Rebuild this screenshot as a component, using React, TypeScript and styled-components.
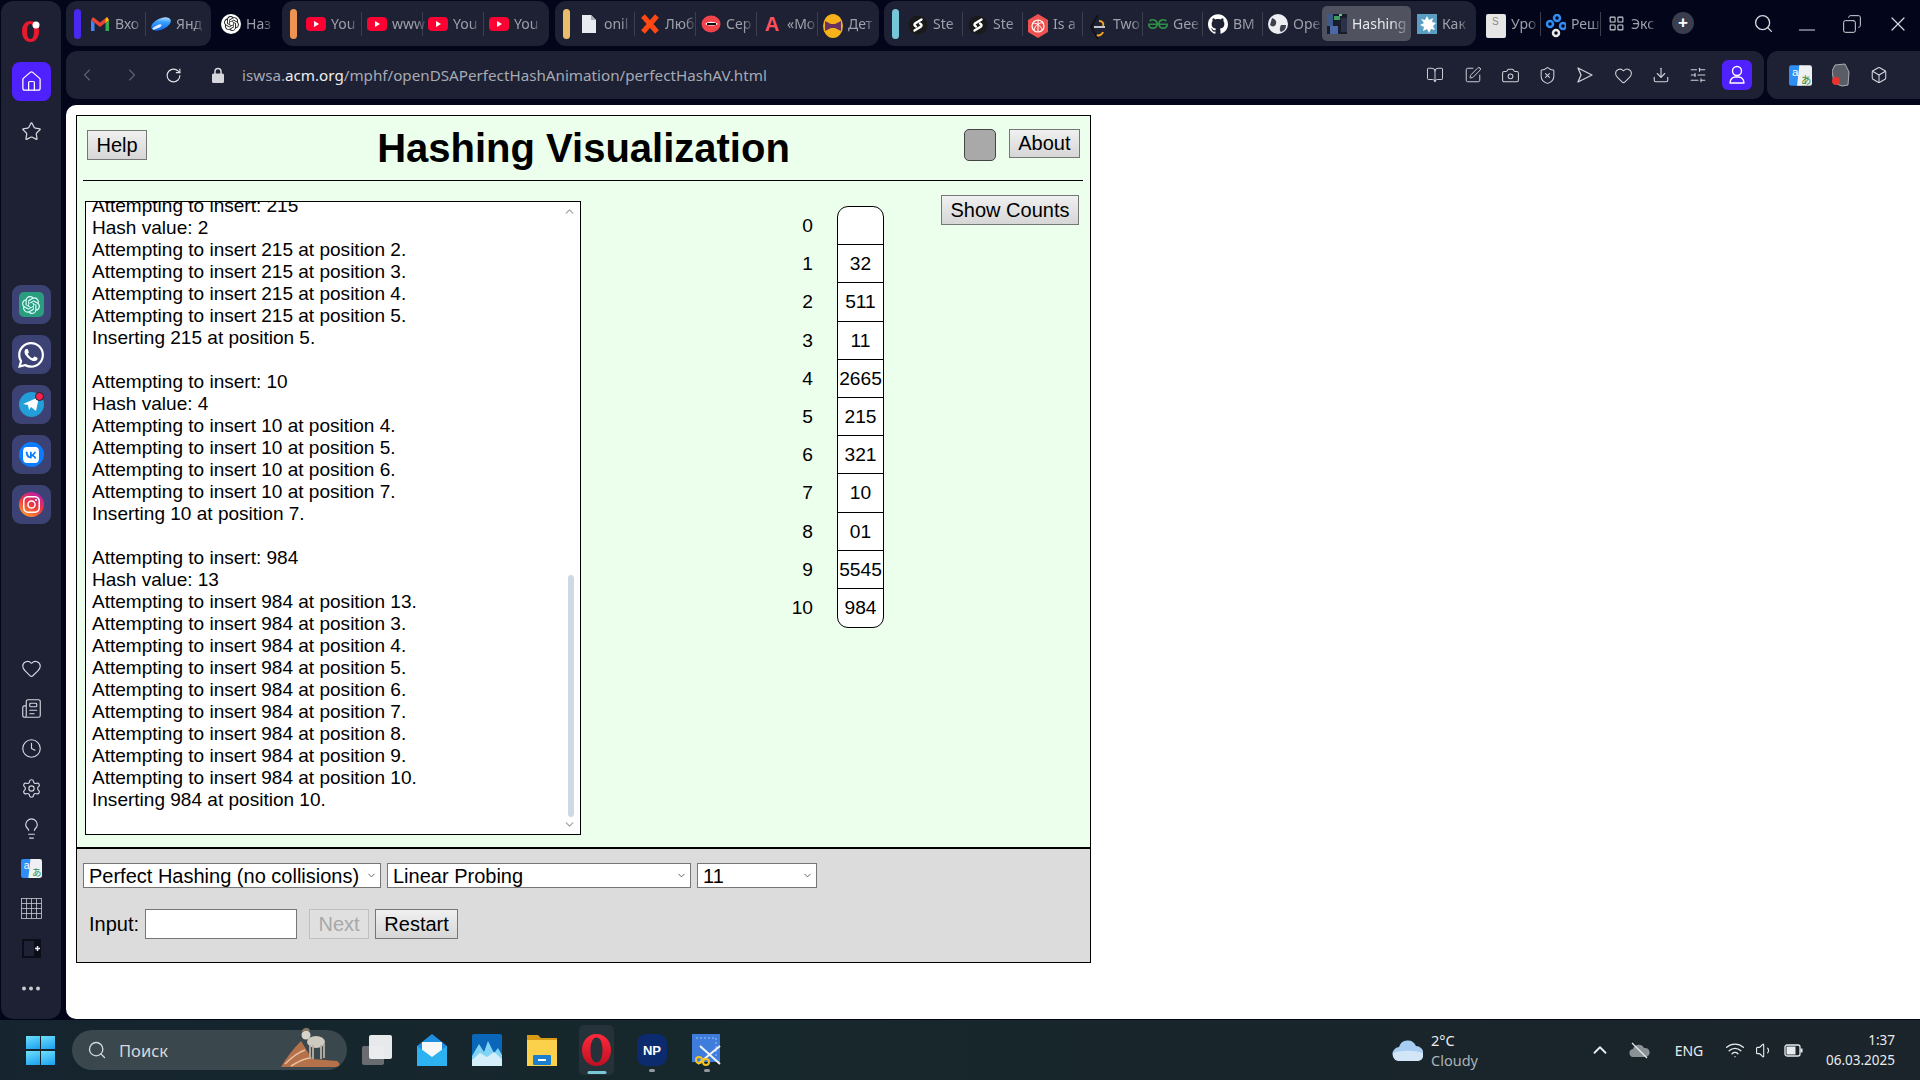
import React from "react";
import styled, { createGlobalStyle } from "styled-components";
import {
  BookOpen, Box, Camera, ChevronDown, ChevronLeft, ChevronRight, ChevronUp, Clock, Copy, Download, Heart, House,
  Lightbulb, Minus, Newspaper, RotateCw, Search, Settings, ShieldX, SlidersHorizontal, SquarePen, Star, Volume1, Wifi, X, LayoutGrid,
} from "lucide-react";
import { SiGeeksforgeeks, SiGithub, SiInstagram, SiOpenai, SiVk, SiWhatsapp } from "react-icons/si";

const Global = createGlobalStyle`
  html, body { margin: 0; padding: 0; height: 100%; overflow: hidden; background: #03051a; }
  #root { height: 100%; }
  * { box-sizing: border-box; }
`;

const ui = `"Noto Sans", "Open Sans", sans-serif`;
const arial = `"Liberation Sans", Arial, sans-serif`;

const Shell = styled.div`
  height: 1080px; display: grid; grid-template-rows: 1fr 60px; background: #03051a; overflow: hidden;
`;
const Window = styled.div`display: flex; min-height: 0; padding: 1px 0 1px 1px;`;

const Sidebar = styled.nav`
  width: 60px; background: #1d2133; border-radius: 12px; display: flex; flex-direction: column;
  align-items: center; padding-top: 18px; flex: none; color: #d5d8e0;
`;
const Logo = styled.div`height: 24px; width: 24px; display: grid; place-items: center; margin-bottom: 19px;`;
const HomeTile = styled.div`
  width: 39px; height: 39px; border-radius: 8px; background: #5021ff; color: #fff;
  display: grid; place-items: center; margin-bottom: 10px;
`;
const SideIcon = styled.div<{ $mt?: number }>`
  width: 40px; height: 40px; display: grid; place-items: center; margin-top: ${p => p.$mt ?? 0}px;
`;
const AppTile = styled.div<{ $mt?: number }>`
  width: 39px; height: 39px; border-radius: 9px; background: #3d4275; display: grid; place-items: center;
  margin-top: ${p => p.$mt ?? 11}px; position: relative;
`;
const AppGlyph = styled.div<{ $bg: string; $round?: boolean }>`
  width: 25px; height: 25px; background: ${p => p.$bg}; border-radius: ${p => (p.$round ? "50%" : "5px")};
  display: grid; place-items: center; color: #fff;
`;
const Badge = styled.span`
  position: absolute; top: 7px; right: 7px; width: 9px; height: 9px; border-radius: 50%; background: #ff1f4b; border: 1px solid #1d2133;
`;

const Main = styled.div`flex: 1; min-width: 0; margin-left: 5px; display: flex; flex-direction: column;`;
const TabStrip = styled.div`height: 45px; display: flex; align-items: stretch; flex: none;`;
const TabGroup = styled.div<{ $ml?: number; $pr?: number; $w?: number }>`
  --tab-w: ${p => p.$w ?? 50}px;
  background: #1d2133; border-radius: 11px; display: flex; align-items: center;
  padding: 0 ${p => p.$pr ?? 10}px 0 8px; margin-left: ${p => p.$ml ?? 0}px;
`;
const Loose = styled.div<{ $ml: number }>`
  --tab-w: 49px; display: flex; align-items: center; margin-left: ${p => p.$ml}px;
`;
const Accent = styled.span<{ $c: string }>`
  width: 7px; height: 30px; border-radius: 4px; background: ${p => p.$c}; margin-right: 9px; flex: none;
`;
const TabItem = styled.div<{ $active?: boolean }>`
  display: flex; align-items: center; gap: 5px; height: 35px; flex: none;
  width: ${p => (p.$active ? "89px" : "var(--tab-w)")};
  ${p => p.$active && "background:#50525f;border-radius:5px;padding:0 5px;margin:0 6px 0 5px;"}
`;
const Fav = styled.span`width: 20px; height: 20px; flex: none; display: grid; place-items: center;`;
const TabTitle = styled.span<{ $active?: boolean }>`
  font: 14px ${ui}; color: ${p => (p.$active ? "#e8e9ee" : "#9ea1ab")}; white-space: nowrap; flex: 1;
  -webkit-mask-image: linear-gradient(90deg, #000 72%, rgba(0,0,0,.25));
  mask-image: linear-gradient(90deg, #000 72%, rgba(0,0,0,.25));
`;
const TabSep = styled.span`width: 1px; height: 24px; background: #3b3e4e; margin: 0 5px; flex: none;`;
const LetterFav = styled.span`font: 700 20px ${arial}; color: #ff4f5e; line-height: 20px;`;
const PlusBtn = styled.div`
  width: 22px; height: 22px; border-radius: 50%; background: #3a3d4d; color: #fff; display: grid; place-items: center;
  margin: 11px 0 0 17px; font: 700 17px ${arial};
`;
const WinControls = styled.div`
  margin-left: auto; display: flex; align-items: center; color: #d7d9de; padding-right: 19px; gap: 20px;
`;
const WinBtn = styled.span<{ $w: number }>`width: ${p => p.$w}px; display: grid; place-items: center;`;

const ToolRow = styled.div`display: flex; gap: 3px; margin-top: 5px; height: 48px; flex: none;`;
const AddressBar = styled.div`
  width: 1698px; flex: none; background: #1d2133; border-radius: 11px; display: flex; align-items: center; color: #c9ccd4; position: relative;
`;
const NavIcon = styled.span<{ $w: number; $dim?: boolean }>`
  width: ${p => p.$w}px; display: grid; place-items: center; flex: none; color: ${p => (p.$dim ? "#5e6170" : "#dfe1e6")};
`;
const Url = styled.span`font: 15.2px ${ui}; color: #a7aab4; margin-left: -4px; white-space: nowrap; b { font-weight: 400; color: #eceef2; }`;
const ToolIcons = styled.div`margin-left: auto; display: flex; align-items: center; gap: 0; padding-right: 12px; color: #cfd2d9;`;
const ToolIcon = styled.span`width: 37.6px; display: grid; place-items: center;`;
const UserBtn = styled.span`
  width: 30px; height: 30px; border-radius: 6px; background: #5021ff; color: #fff; display: grid; place-items: center; margin-left: 5px;
`;
const ExtBar = styled.div`
  flex: 1; background: #1d2133; border-radius: 11px; display: flex; align-items: center; padding-left: 22px; gap: 20px; position: relative; color: #d5d8e0;
`;
const ExtMark = styled.span`width: 7px; height: 30px; border-radius: 3px; background: #5021ff; margin-left: 17px;`;

const Page = styled.main`
  flex: 1; min-height: 0; margin-top: 6px; background: #fff; border-radius: 10px; padding: 10px;
`;
const AppBox = styled.section`
  width: 1015px; height: 848px; border: 1px solid #000; display: flex; flex-direction: column; font: 20px ${arial}; color: #000;
`;
const Upper = styled.div`flex: 1; min-height: 0; background: #ecffec; display: flex; flex-direction: column;`;
const Header = styled.header`
  height: 64px; display: grid; grid-template-columns: 1fr auto 1fr; flex: none; padding: 0 10px;
`;
const Title = styled.h1`margin: 0; font: 700 40px/64px ${arial}; align-self: center;`;
const HeaderLeft = styled.div`padding-top: 14px;`;
const HeaderRight = styled.div`display: flex; justify-content: flex-end; gap: 13px; padding-top: 13px;`;
const Btn = styled.button<{ $h?: number }>`
  height: ${p => p.$h ?? 30}px; border: 1px solid #767676; border-radius: 0; background: linear-gradient(#f0f0f0, #d6d6d6);
  font: 20px ${arial}; color: #000; padding: 0 8.5px; margin: 0;
  &:disabled { color: #a8a8a8; border-color: #c0c0c0; background: #e0e0e0; }
`;
const Led = styled.div`width: 32px; height: 32px; border-radius: 5px; border: 1px solid #444; background: #a9a9a9;`;
const Rule = styled.hr`
  height: 1px; border: 0; background: #000; margin: 0 7px 0 6px; flex: none;
`;
const Content = styled.div`flex: 1; min-height: 0; display: flex; align-items: flex-start; padding: 14px 11px 0 8px;`;
const Log = styled.div`
  width: 496px; height: 634px; margin-top: 6px; border: 1px solid #000; background: #fff; overflow: hidden; position: relative; flex: none; padding-left: 6px;
`;
const LogText = styled.div`margin-top: -7px; font-size: 19.05px; line-height: 22px; white-space: pre;`;
const ScrollThumb = styled.div`
  position: absolute; right: 6px; top: 373px; width: 6px; height: 242px; border-radius: 3px; background: #cfd9e3;
`;
const ScrollArrow = styled.span<{ $top: number }>`position: absolute; right: 4px; top: ${p => p.$top}px; color: #a4a7ab; display: grid;`;
const Table = styled.div`
  margin: 11px 0 0 192px; display: flex; gap: 24px; flex: none; font-size: 19.2px;
`;
const IndexCol = styled.div`width: 40px; text-align: right;`;
const IndexCell = styled.div`height: 38.2px; line-height: 40px;`;
const CellCol = styled.div`
  width: 47px; border: 1px solid #000; border-radius: 11px; background: #fff; overflow: hidden; text-align: center;
`;
const Cell = styled.div`
  height: 38.2px; line-height: 37px; border-bottom: 1px solid #000; &:last-child { border-bottom: 0; }
`;
const CountBtn = styled(Btn)`margin-left: auto;`;

const Lower = styled.div`
  height: 115px; flex: none; border-top: 2px solid #000; background: #dcdcdc; padding: 14px 0 0 6px;
`;
const SelectRow = styled.div`display: flex; gap: 6px; height: 25px;`;
const PickWrap = styled.span`position: relative; display: block;`;
const Pick = styled.select<{ $w: number }>`
  display: block; appearance: none; width: ${p => p.$w}px; height: 25px; font: 20px ${arial}; background-color: #fff; border: 1px solid #767676; border-radius: 0; padding: 0 0 0 5px; color: #000;
`;
const PickArrow = styled.span`position: absolute; right: 4px; top: 7px; color: #555; display: grid; pointer-events: none;`;
const InputRow = styled.div`display: flex; align-items: center; margin: 21px 0 0 6px; height: 30px;`;
const InputLabel = styled.label`margin-right: 6px;`;
const TextInput = styled.input`
  width: 152px; height: 30px; border: 1px solid #767676; background: #fff; padding: 0; margin-right: 12px;
`;
const NextBtn = styled(Btn)`width: 60px; margin-right: 6px; padding: 0;`;
const RestartBtn = styled(Btn)`width: 83px; padding: 0;`;

const Taskbar = styled.footer`
  background: linear-gradient(90deg, #15242e, #17282c 35%, #18262b 60%, #1b242a); display: flex; align-items: center; position: relative; color: #e8ecef;
`;
const Start = styled.div`margin-left: 26px; width: 29px; height: 29px; display: grid; grid-template-columns: 1fr 1fr; gap: 1.5px;`;
const Pane = styled.span`background: linear-gradient(160deg, #6fe0fb, #1a9ff0);`;
const SearchPill = styled.div`
  margin-left: 17px; width: 275px; height: 40px; border-radius: 20px; background: #3a474d; display: flex; align-items: center; padding-left: 15px;
  position: relative; color: #d4d9dc; font: 16.500px ${ui}; gap: 12px;
`;
const Ram = styled.div`position: absolute; right: 6px; top: -3px; width: 62px; height: 42px;`;
const Pinned = styled.div`display: flex; align-items: center; margin-left: 7px;`;
const PinSlot = styled.div<{ $active?: boolean; $dot?: boolean }>`
  width: 45px; height: 50px; margin-right: 10px; border-radius: 5px; display: grid; place-items: center; position: relative;
  margin-left: 0; ${p => p.$active && "background:#253239;width:35px;margin:0 15px 0 5px;"}
  &::after {
    content: ""; position: absolute; bottom: 1px; left: 50%; transform: translateX(-50%); border-radius: 2px;
    ${p => (p.$active ? "width:19px;height:3px;background:#78c8d8;" : p.$dot ? "width:6px;height:3px;background:#8f999e;bottom:3px;" : "")}
  }
`;
const Tray = styled.div`margin-left: auto; display: flex; align-items: center; height: 100%; padding-right: 37px;`;
const Weather = styled.div`display: flex; align-items: center; gap: 8px; margin-right: 96px; position: relative;`;
const WeatherText = styled.div`font: 14.5px/20px ${ui};`;
const Stack = styled.div`font: 13.5px/20px ${ui}; text-align: right; margin-left: 21px;`;
const Muted = styled.div`color: #aab2b7;`;
const TrayIcon = styled.span<{ $w: number }>`width: ${p => p.$w}px; display: grid; place-items: center;`;
const Lang = styled.span`font: 14px ${ui}; width: 70px; text-align: center;`;
const GptBadge = styled.span`
  width: 20px; height: 20px; border-radius: 50%; background: #fff; display: grid; place-items: center; color: #222;
`;
const SsBox = styled.span`
  width: 20px; height: 24px; background: #e6e6e6; border-radius: 2px; color: #888; font: 10px ${arial}; padding: 2px 0 0 6px;
`;

const Yt = () => (
  <svg width="20" height="20" viewBox="0 0 20 20"><rect y="3" width="20" height="14" rx="4" fill="#ff0033" /><path d="M8 7l5 3-5 3z" fill="#fff" /></svg>
);
const Gmail = () => (
  <svg width="20" height="20" viewBox="0 0 20 20">
    <path d="M1 6v11h3.5V9z" fill="#4285f4" /><path d="M19 6v11h-3.5V9z" fill="#34a853" />
    <path d="M1 6l2-3 7 5.5L17 3l2 3-9 7z" fill="#ea4335" /><path d="M15.5 5L17 3l2 3-3.500 3z" fill="#fbbc04" />
  </svg>
);
const Yandex = () => (
  <svg width="20" height="20" viewBox="0 0 20 20"><defs><linearGradient id="ya" x1="0" y1="1" x2="1" y2="0"><stop offset="0" stopColor="#0a4fd8" /><stop offset=".6" stopColor="#35a0ff" /><stop offset="1" stopColor="#fff" /></linearGradient></defs>
    <ellipse cx="10" cy="10" rx="10.500" ry="5.500" transform="rotate(-25 10 10)" fill="url(#ya)" /><ellipse cx="6" cy="13" rx="5" ry="1.500" transform="rotate(-25 6 13)" fill="#fff" opacity=".85" /></svg>
);
const Gpt = () => (<GptBadge><SiOpenai size={15} /></GptBadge>);
const Doc = () => (<svg width="20" height="20" viewBox="0 0 20 20"><path d="M3 1h9l5 5v13H3z" fill="#e8ebf0" /><path d="M12 1l5 5h-5z" fill="#a9adb6" /></svg>);
const Cross = () => (<svg width="20" height="20" viewBox="0 0 20 20"><path d="M3 2l14 16M17 2L3 18" stroke="#ff4814" strokeWidth="5" /></svg>);
const Lips = () => (<svg width="20" height="20" viewBox="0 0 20 20"><ellipse cx="10" cy="10" rx="9.500" ry="8.500" fill="#f2434b" /><path d="M4 10c3-3 9-3 13 0-4 2-9 2-13 0z" fill="#fff" /><rect x="6" y="9" width="9" height="2" fill="#111" /></svg>);
const Bow = () => (<svg width="20" height="24" viewBox="0 0 20 24"><ellipse cx="10" cy="12" rx="10" ry="12" fill="#f6b21b" /><path d="M2 7l6 3h4l6-3v10l-6-3H8l-6 3z" fill="#69325f" /></svg>);
const Step = () => (
  <svg width="20" height="22" viewBox="0 0 20 22"><circle cx="10" cy="11" r="9.500" fill="#1a1a1a" /><path d="M13.500 5.500L7 9.500Q5.500 11 8 12.500M6.500 16.500L13 12.500Q14.500 11 12 9.500" stroke="#fff" strokeWidth="2.400" fill="none" strokeLinecap="round" /></svg>
);
const Hex = () => (<svg width="20" height="24" viewBox="0 0 20 24"><path d="M10 0l10 6v12l-10 6L0 18V6z" fill="#ef5350" /><circle cx="10" cy="12" r="6" fill="none" stroke="#fff" strokeWidth="1.200" /><path d="M5 9c4 0 8 3 9 7M15 9c-3-1-8 2-9 7M10 6v12" stroke="#fff" strokeWidth="1" fill="none" /></svg>);
const Two = () => (<svg width="20" height="26" viewBox="0 0 20 26"><path d="M10 1L3 13l7 12" stroke="#111" strokeWidth="1.800" fill="none" /><path d="M11 7c4 0 5 3 4 5M15 18c-1 3-4 4-6 3" stroke="#f5a623" strokeWidth="2" fill="none" /><rect x="6" y="12" width="11" height="2" fill="#c4c6cc" /></svg>);
const Globe = () => (<svg width="20" height="20" viewBox="0 0 20 20"><circle cx="10" cy="10" r="10" fill="#eceef2" /><path d="M4 4c3 1 5 3 4 6s-4 3-6 1zM13 11l5 0c0 4-2 6-5 7-2-2-1-5 0-7z" fill="#3e414d" /></svg>);
const HashFav = () => (
  <svg width="20" height="20" viewBox="0 0 20 20"><rect width="20" height="20" fill="#181d2d" /><rect x="0" y="0" width="6" height="12" fill="#3d5a8a" /><rect x="7" y="2" width="6" height="4" fill="#3f9b5e" /><rect x="14" y="4" width="6" height="14" fill="#2a3148" /><rect x="3" y="12" width="8" height="8" fill="#4b6aa5" /><rect x="12" y="0" width="3" height="2" fill="#74c08c" /></svg>
);
const Splat = () => (<svg width="20" height="20" viewBox="0 0 20 20"><rect width="20" height="20" fill="#5a9fc2" /><path d="M10 2l2 4 4-2-1 4 4 1-3 3 2 4-4-1-2 4-2-4-4 2 1-4-4-2 4-2-3-4 4 1z" fill="#fff" /></svg>);
const Net = () => (<svg width="20" height="24" viewBox="0 0 20 24"><g fill="none" strokeWidth="2.500" stroke="#2f8df5"><circle cx="4" cy="10" r="3" /><circle cx="11" cy="4" r="3" /><circle cx="17" cy="12" r="3" /></g><circle cx="10" cy="19" r="3" fill="none" stroke="#e8e8e8" strokeWidth="2.500" /></svg>);

type T = { i: React.ReactNode; t: string; active?: boolean };
const Tabs = ({ items }: { items: T[] }) => (
  <>
    {items.map((x, k) => (
      <React.Fragment key={k}>
        {k > 0 && !x.active && !items[k - 1].active && <TabSep />}
        <TabItem $active={x.active}>
          <Fav>{x.i}</Fav>
          <TabTitle $active={x.active}>{x.t}</TabTitle>
        </TabItem>
      </React.Fragment>
    ))}
  </>
);

const OperaMark = () => (
  <svg width="24" height="24" viewBox="0 0 24 24">
    <path fillRule="evenodd" d="M11.500 2C5.500 2 3 7 3 12.500S6 23 11.500 23 20 18 20 12.500 17.500 2 11.500 2zm0 3c2.500 0 3.500 3.500 3.500 7.500s-1 7.500-3.500 7.500S8 16.500 8 12.500 9 5 11.500 5z" fill="#e8182d" />
    <circle cx="17" cy="6" r="3.500" fill="#fff" />
  </svg>
);
const OperaTask = () => (
  <svg width="29" height="32" viewBox="0 0 29 32">
    <defs><linearGradient id="op" x1="0" y1="0" x2="0" y2="1"><stop offset="0" stopColor="#ff2a3c" /><stop offset="1" stopColor="#c00f22" /></linearGradient></defs>
    <path fillRule="evenodd" d="M14.500 0C6 0 0 7 0 16s6 16 14.500 16S29 25 29 16 23 0 14.500 0zm0 3.500c4 0 6 5.500 6 12.500s-2 12.500-6 12.500-6-5.500-6-12.500 2-12.500 6-12.500z" fill="url(#op)" />
  </svg>
);
const Translate = ({ s = 25 }: { s?: number }) => (
  <svg width={s} height={s} viewBox="0 0 20 20">
    <path d="M2 1h9v18H2a2 2 0 01-2-2V3a2 2 0 012-2z" fill="#2f8ef5" /><path d="M9 1h9a2 2 0 012 2v14a2 2 0 01-2 2H7z" fill="#eef0f2" />
    <text x="2.500" y="10" fontSize="10" fill="#fff" fontFamily="Liberation Sans">a</text>
    <text x="10.500" y="17" fontSize="9" fill="#2e8b40" fontFamily="Noto Sans CJK JP">あ</text>
  </svg>
);
const Sudoku = () => (
  <svg width="21" height="21" viewBox="0 0 21 21" stroke="#c9cbd2" strokeWidth=".8" fill="none">
    <rect x=".5" y=".5" width="20" height="20" /><path d="M5.500 .5v20M10.500 .5v20M15.500 .5v20M.5 5.500h20M.5 10.500h20M.5 15.500h20" />
  </svg>
);

const logLines = `Attempting to insert: 215
Hash value: 2
Attempting to insert 215 at position 2.
Attempting to insert 215 at position 3.
Attempting to insert 215 at position 4.
Attempting to insert 215 at position 5.
Inserting 215 at position 5.

Attempting to insert: 10
Hash value: 4
Attempting to insert 10 at position 4.
Attempting to insert 10 at position 5.
Attempting to insert 10 at position 6.
Attempting to insert 10 at position 7.
Inserting 10 at position 7.

Attempting to insert: 984
Hash value: 13
Attempting to insert 984 at position 13.
Attempting to insert 984 at position 3.
Attempting to insert 984 at position 4.
Attempting to insert 984 at position 5.
Attempting to insert 984 at position 6.
Attempting to insert 984 at position 7.
Attempting to insert 984 at position 8.
Attempting to insert 984 at position 9.
Attempting to insert 984 at position 10.
Inserting 984 at position 10.`;

const cells = ["", "32", "511", "11", "2665", "215", "321", "10", "01", "5545", "984"];

const Select = ({ w, label }: { w: number; label: string }) => (
  <PickWrap>
    <Pick $w={w} defaultValue={label}><option value={label}>{label}</option></Pick>
    <PickArrow><ChevronDown size={11} strokeWidth={2} /></PickArrow>
  </PickWrap>
);

export default function App() {
  return (
    <>
      <Global />
      <Shell>
        <Window>
          <Sidebar>
            <Logo><OperaMark /></Logo>
            <HomeTile><House size={23} strokeWidth={1.3} /></HomeTile>
            <SideIcon><Star size={21} strokeWidth={1.4} /></SideIcon>
            <AppTile $mt={134}><AppGlyph $bg="#2a9d7f"><SiOpenai size={18} color="#dff" /></AppGlyph></AppTile>
            <AppTile><SiWhatsapp size={26} color="#fff" /></AppTile>
            <AppTile><AppGlyph $bg="#229ed9" $round><svg width="17" height="15" viewBox="0 0 17 15"><path d="M0 7L16 0l-3 14-5-4-2 3-1-5z" fill="#fff" /></svg></AppGlyph><Badge /></AppTile>
            <AppTile><AppGlyph $bg="#0a7cff" $round><SiVk size={16} /></AppGlyph></AppTile>
            <AppTile><AppGlyph $bg="linear-gradient(30deg,#fdb32c,#f0353f 50%,#b31fb4 90%)" $round><SiInstagram size={17} /></AppGlyph></AppTile>
            <SideIcon $mt={124}><Heart size={21} strokeWidth={1.3} /></SideIcon>
            <SideIcon><Newspaper size={21} strokeWidth={1.3} /></SideIcon>
            <SideIcon><Clock size={21} strokeWidth={1.3} /></SideIcon>
            <SideIcon><Settings size={21} strokeWidth={1.3} /></SideIcon>
            <SideIcon><Lightbulb size={23} strokeWidth={1.2} /></SideIcon>
            <SideIcon><Translate s={21} /></SideIcon>
            <SideIcon><Sudoku /></SideIcon>
            <SideIcon><svg width="19" height="19" viewBox="0 0 19 19"><rect width="19" height="19" fill="#0b0d18" /><rect x="2" y="2" width="10" height="15" fill="#1d2133" /><path d="M13 9.500h5M15.500 7v5" stroke="#eee" strokeWidth="1.500" /></svg></SideIcon>
            <SideIcon><svg width="18" height="5" viewBox="0 0 18 5" fill="#c8cad2"><circle cx="2" cy="2.500" r="2" /><circle cx="9" cy="2.500" r="2" /><circle cx="16" cy="2.500" r="2" /></svg></SideIcon>
          </Sidebar>

          <Main>
            <TabStrip>
              <TabGroup>
                <Accent $c="#4a28f0" />
                <Tabs items={[{ i: <Gmail />, t: "Вхо" }, { i: <Yandex />, t: "Янд" }]} />
              </TabGroup>
              <Loose $ml={10}><Tabs items={[{ i: <Gpt />, t: "Наз" }]} /></Loose>
              <TabGroup $ml={12}>
                <Accent $c="#ef9350" />
                <Tabs items={[{ i: <Yt />, t: "You" }, { i: <Yt />, t: "www" }, { i: <Yt />, t: "You" }, { i: <Yt />, t: "You" }]} />
              </TabGroup>
              <TabGroup $ml={6} $pr={6}>
                <Accent $c="#e9bd6c" />
                <Tabs items={[{ i: <Doc />, t: "onil" }, { i: <Cross />, t: "Люб" }, { i: <Lips />, t: "Сер" }, { i: <LetterFav>A</LetterFav>, t: "«Мо" }, { i: <Bow />, t: "Дет" }]} />
              </TabGroup>
              <TabGroup $ml={5} $w={49}>
                <Accent $c="#76c6da" />
                <Tabs items={[
                  { i: <Step />, t: "Ste" }, { i: <Step />, t: "Ste" }, { i: <Hex />, t: "Is a" }, { i: <Two />, t: "Two" },
                  { i: <SiGeeksforgeeks size={20} color="#2f8d46" />, t: "Gee" }, { i: <SiGithub size={20} color="#fff" />, t: "BM" }, { i: <Globe />, t: "Ope" },
                  { i: <HashFav />, t: "Hashing", active: true }, { i: <Splat />, t: "Как" },
                ]} />
              </TabGroup>
              <Loose $ml={10}>
                <Tabs items={[{ i: <SsBox>S</SsBox>, t: "Уро" }, { i: <Net />, t: "Реш" }, { i: <LayoutGrid size={17} color="#d0d2d8" strokeWidth={1.5} />, t: "Экс" }]} />
              </Loose>
              <PlusBtn>+</PlusBtn>
              <WinControls>
                <WinBtn $w={20}><Search size={21} strokeWidth={1.5} /></WinBtn>
                <WinBtn $w={28}><Minus size={26} strokeWidth={1} style={{ marginTop: 12 }} /></WinBtn>
                <WinBtn $w={22}><Copy size={20} strokeWidth={1.2} style={{ transform: "scaleX(-1)" }} /></WinBtn>
                <WinBtn $w={30}><X size={24} strokeWidth={1.2} /></WinBtn>
              </WinControls>
            </TabStrip>

            <ToolRow>
              <AddressBar>
                <NavIcon $w={42} $dim><ChevronLeft size={20} strokeWidth={1.4} /></NavIcon>
                <NavIcon $w={48} $dim><ChevronRight size={20} strokeWidth={1.4} /></NavIcon>
                <NavIcon $w={34}><RotateCw size={17} strokeWidth={1.6} /></NavIcon>
                <NavIcon $w={56}>
                  <svg width="12" height="16" viewBox="0 0 12 16"><path d="M3 7V4.500a3 3 0 016 0V7" stroke="#d5d7dc" strokeWidth="1.500" fill="none" /><rect y="6.500" width="12" height="9.500" rx="1.500" fill="#d5d7dc" /></svg>
                </NavIcon>
                <Url>iswsa.<b>acm.org</b>/mphf/openDSAPerfectHashAnimation/perfectHashAV.html</Url>
                <ToolIcons>
                  <ToolIcon><BookOpen size={18} strokeWidth={1.3} /></ToolIcon>
                  <ToolIcon><SquarePen size={18} strokeWidth={1.3} /></ToolIcon>
                  <ToolIcon><Camera size={19} strokeWidth={1.3} /></ToolIcon>
                  <ToolIcon><ShieldX size={19} strokeWidth={1.3} /></ToolIcon>
                  <ToolIcon><svg width="18" height="18" viewBox="0 0 18 18" fill="none" stroke="currentColor" strokeWidth="1.300"><path d="M2 2l14 7-14 7 3-7z" strokeLinejoin="round" /></svg></ToolIcon>
                  <ToolIcon><Heart size={19} strokeWidth={1.3} /></ToolIcon>
                  <ToolIcon><Download size={18} strokeWidth={1.5} /></ToolIcon>
                  <ToolIcon><SlidersHorizontal size={18} strokeWidth={1.5} /></ToolIcon>
                  <UserBtn><svg width="18" height="20" viewBox="0 0 18 20" fill="none" stroke="#fff" strokeWidth="1.400"><circle cx="9" cy="6" r="4.500" /><path d="M2 18c0-4 3-6 5-6h4c2 0 5 2 5 6z" strokeLinejoin="round" /></svg></UserBtn>
                </ToolIcons>
              </AddressBar>
              <ExtBar>
                <Translate s={23} />
                <svg width="18" height="24" viewBox="0 0 18 24"><path d="M3 2l10-1 4 8-1 13-6 1-8-3L0 8z" fill="#5a5d65" stroke="#c8cad0" strokeWidth=".8" /><circle cx="4" cy="18" r="4" fill="#e8342e" /></svg>
                <Box size={18} strokeWidth={1.4} />
                <ExtMark />
              </ExtBar>
            </ToolRow>

            <Page>
              <AppBox>
                <Upper>
                  <Header>
                    <HeaderLeft><Btn>Help</Btn></HeaderLeft>
                    <Title>Hashing Visualization</Title>
                    <HeaderRight><Led /><Btn $h={29}>About</Btn></HeaderRight>
                  </Header>
                  <Rule />
                  <Content>
                    <Log>
                      <LogText>{logLines}</LogText>
                      <ScrollArrow $top={3}><ChevronUp size={13} strokeWidth={2.5} /></ScrollArrow>
                      <ScrollThumb />
                      <ScrollArrow $top={616}><ChevronDown size={13} strokeWidth={2.5} /></ScrollArrow>
                    </Log>
                    <Table>
                      <IndexCol>{cells.map((_, i) => <IndexCell key={i}>{i}</IndexCell>)}</IndexCol>
                      <CellCol>{cells.map((c, i) => <Cell key={i}>{c}</Cell>)}</CellCol>
                    </Table>
                    <CountBtn>Show Counts</CountBtn>
                  </Content>
                </Upper>
                <Lower>
                  <SelectRow>
                    <Select w={298} label="Perfect Hashing (no collisions)" />
                    <Select w={304} label="Linear Probing" />
                    <Select w={120} label="11" />
                  </SelectRow>
                  <InputRow>
                    <InputLabel>Input:</InputLabel>
                    <TextInput />
                    <NextBtn disabled>Next</NextBtn>
                    <RestartBtn>Restart</RestartBtn>
                  </InputRow>
                </Lower>
              </AppBox>
            </Page>
          </Main>
        </Window>

        <Taskbar>
          <Start><Pane /><Pane /><Pane /><Pane /></Start>
          <SearchPill>
            <Search size={20} strokeWidth={1.6} />
            Поиск
            <Ram>
              <svg width="62" height="42" viewBox="0 0 62 42">
                <path d="M2 40C8 30 14 22 22 14c4 6 8 14 12 18l24 2c4 3 3 6-2 6z" fill="#b5714a" />
                <path d="M6 37c8-8 14-12 20-14M12 39c8-5 14-8 20-8" stroke="#e9c0a0" strokeWidth="1.500" fill="none" />
                <ellipse cx="37" cy="15" rx="9" ry="6" fill="#cfcabf" />
                <path d="M31 18v14M34 18v14M42 18v14M45 17v14" stroke="#b8b2a6" strokeWidth="1.800" />
                <circle cx="27" cy="8" r="4.500" fill="#d8d3c8" /><path d="M24 5c0-4 5-4 6-1" stroke="#8b7b63" strokeWidth="2" fill="none" />
              </svg>
            </Ram>
          </SearchPill>
          <Pinned>
            <PinSlot>
              <svg width="30" height="30" viewBox="0 0 30 30"><rect x="0" y="11" width="22" height="19" rx="2" fill="#6a6d70" /><rect x="7" y="0" width="23" height="24" rx="2" fill="#f2f3f4" opacity=".95" /></svg>
            </PinSlot>
            <PinSlot>
              <svg width="30" height="32" viewBox="0 0 30 32"><path d="M15 0l15 12v20H0V12z" fill="#1e8fe0" /><path d="M5 8h20v9l-10 7-10-7z" fill="#f5f7f9" /><path d="M0 12l15 11 15-11v20H0z" fill="#2cb2f0" /></svg>
            </PinSlot>
            <PinSlot>
              <svg width="30" height="32" viewBox="0 0 30 32"><rect width="30" height="32" rx="2" fill="#0a66b8" /><path d="M0 22l7-12 5 8 4-11 6 12 4-5 4 7v11H0z" fill="#7fd3f5" /><path d="M0 26l8-7 7 4 7-5 8 7v7H0z" fill="#d4eefa" /></svg>
            </PinSlot>
            <PinSlot>
              <svg width="30" height="32" viewBox="0 0 30 32"><path d="M0 1h11l3 3h16v4H0z" fill="#d99a16" /><path d="M0 6h30v26H0z" fill="#fbd14b" /><rect x="6" y="21" width="18" height="10" rx="1" fill="#1a7fd0" /><rect x="11" y="25" width="8" height="2" fill="#fff" /></svg>
            </PinSlot>
            <PinSlot $active><OperaTask /></PinSlot>
            <PinSlot $dot>
              <svg width="30" height="32" viewBox="0 0 30 32"><rect width="30" height="32" rx="9" fill="#0c2a6e" /><text x="15" y="21" fontSize="13" fontWeight="700" fill="#fff" textAnchor="middle" fontFamily="Liberation Sans">NP</text></svg>
            </PinSlot>
            <PinSlot $dot>
              <svg width="30" height="32" viewBox="0 0 30 32"><rect width="28" height="28" fill="#3f7ddc" /><path d="M4 4h20v20" stroke="#9fc4f5" strokeDasharray="2 2" fill="none" /><path d="M6 30l22-18M28 30L8 12" stroke="#f2f3f4" strokeWidth="2" /><circle cx="7" cy="26" r="3" fill="none" stroke="#f6c21c" strokeWidth="2" /><circle cx="14" cy="28" r="3" fill="none" stroke="#f6c21c" strokeWidth="2" /></svg>
            </PinSlot>
          </Pinned>
          <Tray>
            <Weather>
              <svg width="31" height="22" viewBox="0 0 31 22"><path d="M8 22a7 7 0 01-1-14 9 9 0 0117-1 7 7 0 010 15z" fill="#a8cdf2" /><path d="M1 14c8-3 20-3 30 0v3a5 5 0 01-5 5H7a6 6 0 01-6-6z" fill="#d3e6f8" /></svg>
              <WeatherText>
                <div>2°C</div>
                <Muted>Cloudy</Muted>
              </WeatherText>
            </Weather>
            <TrayIcon $w={52}><ChevronUp size={22} strokeWidth={2} /></TrayIcon>
            <TrayIcon $w={28}>
              <svg width="21" height="17" viewBox="0 0 21 17"><path d="M5 15a4 4 0 01-1-8 6 6 0 0111-1 4.500 4.500 0 012 9z" fill="#8b9296" /><path d="M3 1l15 15" stroke="#e8ecef" strokeWidth="1.300" /></svg>
            </TrayIcon>
            <Lang>ENG</Lang>
            <TrayIcon $w={22}><Wifi size={20} strokeWidth={1.6} /></TrayIcon>
            <TrayIcon $w={38}><Volume1 size={19} strokeWidth={1.4} /></TrayIcon>
            <TrayIcon $w={21}>
              <svg width="20" height="14" viewBox="0 0 20 14" fill="none" stroke="#e8ecef" strokeWidth="1.300"><rect x="1" y="2" width="15" height="11" rx="2" /><rect x="2.500" y="3.500" width="9" height="8" fill="#e8ecef" stroke="none" /><path d="M17.500 5.500v4" strokeWidth="2" /></svg>
            </TrayIcon>
            <Stack>
              <div>1:37</div>
              <div>06.03.2025</div>
            </Stack>
          </Tray>
        </Taskbar>
      </Shell>
    </>
  );
}
